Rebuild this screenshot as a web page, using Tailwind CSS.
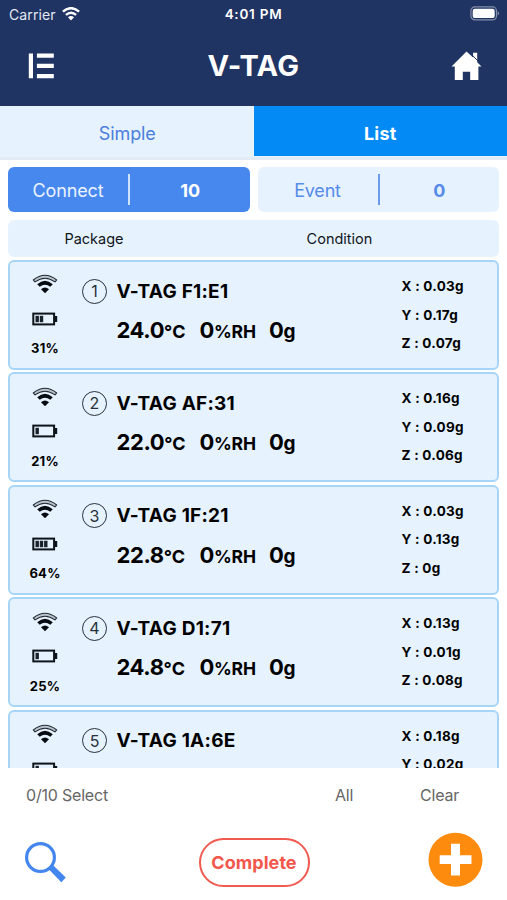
<!DOCTYPE html>
<html lang="en">
<head>
<meta charset="utf-8">
<title>V-TAG</title>
<script src="https://cdn.jsdelivr.net/npm/@tailwindcss/browser@4"></script>
</head>
<body class="w-[507px] h-[900px] overflow-hidden bg-white font-['Inter',sans-serif] text-black">
<svg class="hidden">
  <symbol id="signal" viewBox="0 0 26 20">
    <path d="M1.3 6Q13-3.4 24.7 6L23 7.9Q13 .5 3 7.9Z" fill="#b9c4ce" stroke="#222b33" stroke-width="1.1" stroke-linejoin="round"/>
    <path d="M5.2 10.3Q13 3.3 20.8 10.3L18.3 12.8Q13 8.7 7.7 12.8Z" fill="#050b10"/>
    <path d="M9 15.2Q13 11.6 17 15.2L13 19.2Z" fill="#050b10"/>
  </symbol>
</svg>
<div class="flex h-full flex-col">
  <header class="h-[106px] shrink-0 bg-[#1f3463] text-white">
    <div class="grid h-7 grid-cols-3 items-center pl-[9px] pr-[7px]">
      <div class="flex items-center gap-[6px] text-[14px] tracking-[0.1px] text-[#e3e8f2]">Carrier
        <svg class="h-[14px] w-[18px]" viewBox="0 0 18 14" fill="none" stroke="#fff" stroke-width="2.4"><path d="M.9 4.7Q9-2.4 17.1 4.7M3.9 7.9Q9 3.5 14.1 7.9"/><path d="M6 10.2Q9 7.8 12 10.2L9 13.5Z" fill="#fff" stroke="none"/></svg>
      </div>
      <div class="-ml-[2px] text-center text-[13.5px] font-semibold tracking-[0.75px] whitespace-nowrap">4:01 PM</div>
      <svg class="-mt-[2px] h-[15px] w-[31px] justify-self-end" viewBox="0 0 31 15"><rect x="1.9" y=".9" width="25.6" height="13" rx="4" fill="none" stroke="#8590aa" stroke-width="1.2"/><rect x="3.7" y="2.7" width="22" height="9.4" rx="2.2" fill="#fff"/><path d="M28.6 5.2Q31.5 7.4 28.6 9.6Z" fill="#8590aa"/></svg>
    </div>
    <div class="flex h-[76px] items-center justify-between pl-7 pr-[25px]">
      <svg class="h-[26px] w-[31px]" viewBox="0 0 31 26" fill="#fff"><path d="M.8 .5H5v24.8H.8zM8.9 .5h16.9v4.2H8.9zM8.9 10.8h16.9V15H8.9zM8.9 21.1h16.9v4.2H8.9z"/></svg>
      <h1 class="-mt-[2px] -ml-[3px] text-[29px] font-bold leading-none tracking-[0.3px]">V-TAG</h1>
      <svg class="h-[30px] w-[31px]" viewBox="0 0 31 30" fill="#fff"><path d="M15.5 .4L.5 15.6h3.3V29h8v-8.3h7.4V29h8.2V15.6h3.1L26.2 11.2V1.8h-4.1v4.8Z"/><path d="M19.6 2.5L27 10" stroke="#1f3463" stroke-width="1"/></svg>
    </div>
  </header>
  <nav class="flex h-[54px] shrink-0 items-start border-b-[3px] border-[#e3ebf5] bg-[#e6f2fe] text-[18px]">
    <div class="flex h-[51px] w-[253.5px] items-center justify-center pt-[3px] pl-[1px] tracking-[-0.1px] text-[#4b7fdc]">Simple</div>
    <div class="flex h-[50px] w-[253.5px] items-center justify-center bg-[#048af5] pt-[4px] font-bold tracking-[0.2px] text-white">List</div>
  </nav>
  <div class="mt-[7px] grid h-[45px] shrink-0 grid-cols-2 gap-2 px-2 text-[18px]">
    <div class="grid grid-cols-[122px_1fr] items-center rounded-md bg-[#4788ee] text-center text-[#eaf3ff]">
      <div class="flex h-[31px] items-center justify-center border-r-2 border-[#cfe2ff] pt-px tracking-[-0.15px]">Connect</div><b class="pt-px pl-[1px] text-white">10</b>
    </div>
    <div class="grid grid-cols-[122px_1fr] items-center rounded-md bg-[#e6f2fe] text-center text-[#568be8]">
      <div class="flex h-[31px] items-center justify-center border-r-2 border-[#6b9aeb] pt-px tracking-[-0.2px]">Event</div><b class="pt-px">0</b>
    </div>
  </div>
  <div class="mx-2 mt-2 grid h-[37px] shrink-0 grid-cols-[172px_1fr] items-center rounded-md bg-[#e6f2fe] text-center text-[14.5px] text-[#10161c]">
    <div>Package</div><div>Condition</div>
  </div>
  <main id="list" class="mx-2 mt-[3px] flex h-[508px] shrink-0 flex-col gap-[2.4px] overflow-hidden"></main>
  <div class="flex h-[54px] shrink-0 items-center pl-[26px] text-[16px] tracking-[-0.2px] text-[#666]">
    <div class="w-[309px]">0/10 Select</div><div class="w-[85px]">All</div><div>Clear</div>
  </div>
  <footer class="flex flex-1 justify-between pl-6 pr-6 pt-[10px]">
    <svg class="mt-[9px] h-[43px] w-[43px]" viewBox="0 0 43 43"><circle cx="16.5" cy="16.5" r="13.9" fill="none" stroke="#4386ed" stroke-width="3.2"/><path d="M24.5 28L28.6 23.8L41.8 36.6L37.3 41.3Z" fill="#4386ed"/></svg>
    <button class="mt-[6px] ml-[13px] h-[49px] w-[111px] rounded-full border-2 border-[#f05a50] text-[18px] font-bold tracking-[0.05px] text-[#f3564b]">Complete</button>
    <svg class="h-[55px] w-[55px]" viewBox="0 0 55 55"><circle cx="27.5" cy="27.7" r="27" fill="#fd8b0e"/><path d="M23 11.8h9v11.4h11.5v8.8H32v11.6h-9V32H11.7v-8.8H23Z" fill="#fff"/></svg>
  </footer>
</div>
<script>
const tags = [
  { name: "V-TAG F1:E1", pct: 31, temp: "24.0", axes: ["X : 0.03g", "Y : 0.17g", "Z : 0.07g"], bars: 2 },
  { name: "V-TAG AF:31", pct: 21, temp: "22.0", axes: ["X : 0.16g", "Y : 0.09g", "Z : 0.06g"], bars: 1 },
  { name: "V-TAG 1F:21", pct: 64, temp: "22.8", axes: ["X : 0.03g", "Y : 0.13g", "Z : 0g"], bars: 3 },
  { name: "V-TAG D1:71", pct: 25, temp: "24.8", axes: ["X : 0.13g", "Y : 0.01g", "Z : 0.08g"], bars: 1 },
  { name: "V-TAG 1A:6E", axes: ["X : 0.18g", "Y : 0.02g"], bars: 1 }
];
document.getElementById("list").innerHTML = tags.map((t, i) => `
<section class="flex h-[110px] shrink-0 rounded-md border-2 border-[#a6d5f8] bg-[#e6f2fe]">
  <div class="flex w-[70px] flex-col items-center pt-[12.4px]">
    <svg class="h-5 w-[26px]"><use href="#signal"/></svg>
    <svg class="mt-[17.6px] h-[14px] w-[26px]" viewBox="0 0 26 14"><rect x="1.3" y="1.6" width="20.8" height="10.8" fill="none" stroke="#0c1319" stroke-width="2"/><rect x="23" y="4" width="2.2" height="6" fill="#0c1319"/>${[0, 1, 2].slice(0, t.bars).map(n => `<rect x="${3.5 + n * 4.3}" y="3.8" width="3.4" height="6.4" fill="#18222a"/>`).join("")}</svg>
    ${t.pct ? `<div class="mt-[14.5px] text-[13px] leading-4 font-bold tracking-[0.25px]">${t.pct}%</div>` : ""}
  </div>
  <div class="w-[321px]">
    <div class="flex items-center pt-[16.6px]">
      <div class="ml-[2px] flex size-[25px] items-center justify-center rounded-full border-[1.5px] border-[#27313a] text-[16px] leading-none text-[#27313a]">${i + 1}</div>
      <div class="ml-[9.5px] pt-[1px] text-[19px] leading-6 font-bold tracking-[0.25px]">${t.name}</div>
    </div>
    ${t.temp ? `<div class="ml-[36.5px] mt-[12.4px] flex items-baseline text-[22px] leading-7 font-bold tracking-[-0.4px] whitespace-nowrap">
      <div class="w-[83px]">${t.temp}<span class="text-[18px] tracking-[0.1px]">°C</span></div>
      <div class="w-[69.5px]">0<span class="text-[17.5px] tracking-[-0.15px]">%RH</span></div>
      <div>0<span class="text-[19px]">g</span></div>
    </div>` : ""}
  </div>
  <div class="pt-[10px] pl-[0.5px] text-[13.5px] leading-[28.5px] font-bold tracking-[0.25px]">${t.axes.map(a => `<div>${a}</div>`).join("")}</div>
</section>`).join("");
</script>
</body>
</html>
